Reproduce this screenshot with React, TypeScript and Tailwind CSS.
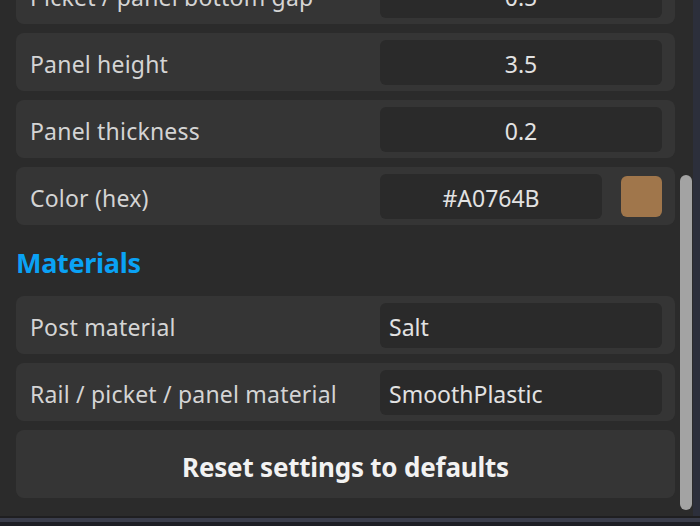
import React from "react";

const font = { fontFamily: '"Noto Sans", "Open Sans", sans-serif' };

function Row({ label, value, align = "center", swatch }: { label: string; value: string; align?: "center" | "left"; swatch?: string }) {
  return (
    <div className="h-[58px] rounded-lg bg-[#353535] flex items-center pl-[14px] pr-[13px]">
      <div className="flex-1 text-[23px] text-[#d4d4d4] tracking-[0.2px] whitespace-nowrap pt-[5px]">{label}</div>
      <div className="flex items-center gap-[19px]">
        <div
          className={`h-[45px] rounded-md bg-[#2a2a2a] flex items-center text-[23px] text-[#e2e2e2] pt-[5px] ${
            swatch ? "w-[222px]" : "w-[282px]"
          } ${align === "center" ? "justify-center" : "justify-start pl-[9px]"}`}
        >
          {value}
        </div>
        {swatch && <div className="w-[41px] h-[41px] rounded-[6px] bg-[#A0764B]" />}
      </div>
    </div>
  );
}

export default function App() {
  return (
    <div className="w-[700px] h-[526px] overflow-hidden bg-[#2b2b2b] flex flex-col" style={font}>
      <div className="flex-1 flex min-h-0">
        <div className="flex-1 overflow-hidden pl-[16px] pr-[5px]">
          <div className="flex flex-col gap-[9px] mt-[-34px]">
            <Row label="Picket / panel bottom gap" value="0.5" />
            <Row label="Panel height" value="3.5" />
            <Row label="Panel thickness" value="0.2" />
            <Row label="Color (hex)" value="#A0764B" swatch="#A0764B" />
            <div className="h-[53px] flex items-center pt-[5px] text-[27px] font-bold text-[#0aa2f5] tracking-[-0.3px]">
              Materials
            </div>
            <Row label="Post material" value="Salt" align="left" />
            <Row label="Rail / picket / panel material" value="SmoothPlastic" align="left" />
            <div className="h-[68px] rounded-lg bg-[#353535] flex items-center justify-center pt-[7px] text-[26px] font-bold text-[#f2f2f2] tracking-[-0.2px]">
              Reset settings to defaults
            </div>
          </div>
        </div>
        <div className="w-[13px] relative">
          <div className="absolute left-0 w-[12px] top-[175px] h-[335px] rounded-full bg-[#a3a3a3]" />
        </div>
        <div className="w-[7px] bg-[#2c2f3b]" />
      </div>
      <div className="h-[2px] bg-[#1f1f21]" />
      <div className="h-[4px] bg-[#3a3d4b]" />
      <div className="h-[4px] bg-[#1d1e25]" />
    </div>
  );
}
